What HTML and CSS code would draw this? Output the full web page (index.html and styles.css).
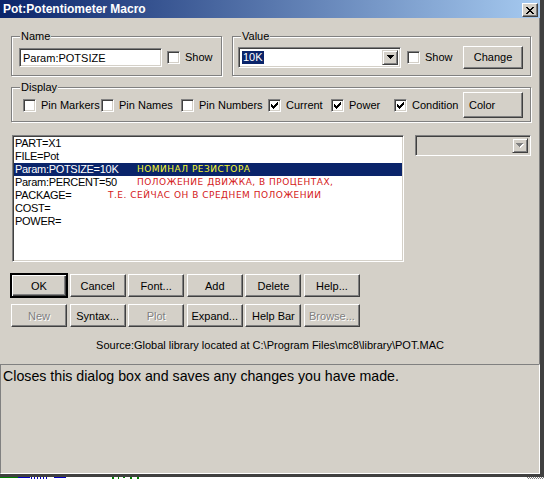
FILE: index.html
```html
<!DOCTYPE html>
<html>
<head>
<meta charset="utf-8">
<link rel="stylesheet" href="styles.css">
</head>
<body>
<div class="screen">
  <div class="window">
    <div class="titlebar">
      <span class="title">Pot:Potentiometer Macro</span>
      <span class="close"><svg width="8" height="7" viewBox="0 0 8 7" shape-rendering="crispEdges"><path d="M0 0h2v1h-2zM6 0h2v1h-2zM1 1h2v1h-2zM5 1h2v1h-2zM2 2h4v1h-4zM3 3h2v1h-2zM2 4h4v1h-4zM1 5h2v1h-2zM5 5h2v1h-2zM0 6h2v1h-2zM6 6h2v1h-2z" fill="#000"/></svg></span>
    </div>
    <div class="client">
      <div class="row-top">
        <div class="group g-name">
          <span class="legend">Name</span>
          <div class="grow">
            <div class="edit e-name">Param:POTSIZE</div>
            <span class="check"><span class="box"></span><span>Show</span></span>
          </div>
        </div>
        <div class="group g-value">
          <span class="legend">Value</span>
          <div class="grow">
            <div class="combo c-value">
              <span class="combo-text"><span class="sel">10K</span></span>
              <span class="dd"><svg width="7" height="4" viewBox="0 0 7 4" shape-rendering="crispEdges"><path d="M0 0h7v1h-7zM1 1h5v1h-5zM2 2h3v1h-3zM3 3h1v1h-1z" fill="#000"/></svg></span>
            </div>
            <span class="check c-show2"><span class="box"></span><span>Show</span></span>
            <span class="btn b-change">Change</span>
          </div>
        </div>
      </div>

      <div class="group g-display">
        <span class="legend">Display</span>
        <div class="drow">
          <span class="check"><span class="box"></span><span>Pin Markers</span></span>
          <span class="check"><span class="box"></span><span>Pin Names</span></span>
          <span class="check"><span class="box"></span><span>Pin Numbers</span></span>
          <span class="check"><span class="box on"><svg width="7" height="7" viewBox="0 0 7 7" shape-rendering="crispEdges"><path d="M6 0h1v1h-1zM5 1h2v1h-2zM0 2h1v1h-1zM4 2h3v1h-3zM0 3h2v1h-2zM3 3h3v1h-3zM0 4h5v1h-5zM1 5h3v1h-3zM2 6h1v1h-1z" fill="#000"/></svg></span><span>Current</span></span>
          <span class="check"><span class="box on"><svg width="7" height="7" viewBox="0 0 7 7" shape-rendering="crispEdges"><path d="M6 0h1v1h-1zM5 1h2v1h-2zM0 2h1v1h-1zM4 2h3v1h-3zM0 3h2v1h-2zM3 3h3v1h-3zM0 4h5v1h-5zM1 5h3v1h-3zM2 6h1v1h-1z" fill="#000"/></svg></span><span>Power</span></span>
          <span class="check"><span class="box on"><svg width="7" height="7" viewBox="0 0 7 7" shape-rendering="crispEdges"><path d="M6 0h1v1h-1zM5 1h2v1h-2zM0 2h1v1h-1zM4 2h3v1h-3zM0 3h2v1h-2zM3 3h3v1h-3zM0 4h5v1h-5zM1 5h3v1h-3zM2 6h1v1h-1z" fill="#000"/></svg></span><span>Condition</span></span>
          <span class="btn b-color">Color</span>
        </div>
      </div>

      <div class="mid">
        <div class="listbox">
          <div class="li">PART=X1</div>
          <div class="li">FILE=Pot</div>
          <div class="li selected">Param:POTSIZE=10K<span class="note yellow n1">НОМИНАЛ РЕЗИСТОРА</span></div>
          <div class="li">Param:PERCENT=50<span class="note red n1">ПОЛОЖЕНИЕ ДВИЖКА, В ПРОЦЕНТАХ,</span></div>
          <div class="li">PACKAGE=<span class="note red n2">Т.Е. СЕЙЧАС ОН В СРЕДНЕМ ПОЛОЖЕНИИ</span></div>
          <div class="li">COST=</div>
          <div class="li">POWER=</div>
        </div>
        <div class="combo c-side disabled">
          <span class="combo-text"></span>
          <span class="dd"><svg width="8" height="5" viewBox="0 0 8 5" shape-rendering="crispEdges"><path d="M1 1h7v1h-7zM2 2h5v1h-5zM3 3h3v1h-3zM4 4h1v1h-1z" fill="#fff"/><path d="M0 0h7v1h-7zM1 1h5v1h-5zM2 2h3v1h-3zM3 3h1v1h-1z" fill="#808080"/></svg></span>
        </div>
      </div>

      <div class="buttons">
        <span class="btn default">OK</span>
        <span class="btn">Cancel</span>
        <span class="btn">Font...</span>
        <span class="btn">Add</span>
        <span class="btn">Delete</span>
        <span class="btn">Help...</span>
        <span class="btn off">New</span>
        <span class="btn">Syntax...</span>
        <span class="btn off">Plot</span>
        <span class="btn">Expand...</span>
        <span class="btn">Help Bar</span>
        <span class="btn off">Browse...</span>
      </div>

      <div class="source">Source:Global library located at C:\Program Files\mc8\library\POT.MAC</div>

      <div class="help">Closes this dialog box and saves any changes you have made.</div>
    </div>
  </div>
  <div class="underlay">
    <svg width="544" height="2" viewBox="0 0 544 2" shape-rendering="crispEdges">
      <rect x="0" y="0" width="544" height="2" fill="#ffffff"/>
      <rect x="0" y="0" width="18" height="1" fill="#008000"/>
      <rect x="18" y="0" width="12" height="1" fill="#0000c0"/>
      <path d="M31 0h1v2h-1zM34 0h1v2h-1zM37 0h1v2h-1zM40 0h1v2h-1zM43 0h1v2h-1zM46 0h1v2h-1zM54 0h12v1h-12z" fill="#0000c0"/>
      <path d="M112 0h2v2h-2zM118 0h1v2h-1zM123 0h2v1h-2zM130 0h2v2h-2zM137 0h2v2h-2z" fill="#008000"/>
      <path d="M527 0h1v1h-1zM529 0h1v1h-1zM531 0h1v1h-1zM533 0h1v1h-1zM535 0h1v1h-1zM537 0h1v1h-1zM539 0h1v1h-1zM541 0h1v1h-1zM543 0h1v1h-1zM528 1h1v1h-1zM530 1h1v1h-1zM532 1h1v1h-1zM534 1h1v1h-1zM536 1h1v1h-1zM538 1h1v1h-1zM540 1h1v1h-1zM542 1h1v1h-1z" fill="#808080"/>
    </svg>
  </div>
</div>
</body>
</html>
```
FILE: styles.css
```css
* { box-sizing: border-box; }

body {
  margin: 0;
  background: #ffffff;
  font-family: "Liberation Sans", Arial, sans-serif;
  font-size: 11px;
  color: #000;
}

.screen {
  width: 544px;
  height: 479px;
  overflow: hidden;
  display: flex;
  flex-direction: column;
}

.window {
  width: 544px;
  height: 477px;
  flex: none;
  display: flex;
  flex-direction: column;
  background: #d4d0c8;
  border-right: 4px solid #404040;
  border-bottom: 3px solid #404040;
  box-shadow: inset -1px -1px 0 #808080;
}

.titlebar {
  height: 18px;
  flex: none;
  width: 540px;
  display: flex;
  align-items: center;
  justify-content: space-between;
  background: linear-gradient(to right, #0a246a, #a6caf0);
  padding-left: 3px;
  padding-right: 2px;
}

.title {
  color: #fff;
  font-weight: bold;
  font-size: 12px;
  line-height: 18px;
  white-space: nowrap;
}

.close {
  width: 16px;
  height: 14px;
  display: flex;
  align-items: center;
  justify-content: center;
  background: #d4d0c8;
  border: 1px solid;
  border-color: #fff #404040 #404040 #fff;
  box-shadow: inset -1px -1px 0 #808080;
  margin-top: 2px;
}

.client {
  flex: 1;
  width: 540px;
  display: flex;
  flex-direction: column;
  min-height: 0;
}

/* group boxes */
.group {
  border: 1px solid #808080;
  box-shadow: 1px 1px 0 #fff, inset 1px 1px 0 #fff;
}

.legend {
  display: block;
  width: max-content;
  margin: -7px 0 0 8px;
  padding: 0 1px;
  line-height: 13px;
  background: #d4d0c8;
}

.row-top {
  display: flex;
  gap: 10px;
  margin: 18px 0 0 11px;
}

.g-name { width: 211px; height: 40px; }
.g-value { width: 299px; height: 40px; }

.grow {
  display: flex;
  align-items: center;
  height: 24px;
  margin-top: 2px;
}

.g-name .grow { padding-left: 7px; }
.g-value .grow { padding-left: 5px; padding-right: 7px; }

.edit {
  background: #fff;
  border: 1px solid;
  border-color: #808080 #fff #fff #808080;
  box-shadow: inset 1px 1px 0 #404040, inset -1px -1px 0 #d4d0c8;
  height: 19px;
  line-height: 15px;
  padding: 2px 3px;
  white-space: nowrap;
}

.e-name { width: 143px; margin-right: 5px; }

.check {
  display: flex;
  align-items: center;
  gap: 5px;
  white-space: nowrap;
  line-height: 13px;
}

.box {
  width: 13px;
  height: 13px;
  flex: none;
  background: #fff;
  border: 1px solid;
  border-color: #808080 #fff #fff #808080;
  box-shadow: inset 1px 1px 0 #404040, inset -1px -1px 0 #d4d0c8;
  display: flex;
  align-items: center;
  justify-content: center;
}

.box svg { display: block; }

.combo {
  display: flex;
  align-items: stretch;
  height: 21px;
  background: #fff;
  border: 1px solid;
  border-color: #808080 #fff #fff #808080;
  box-shadow: inset 1px 1px 0 #404040, inset -1px -1px 0 #d4d0c8;
  padding: 2px;
}

.c-value { width: 163px; margin-right: 6px; }

.combo-text {
  flex: 1;
  display: flex;
  align-items: center;
  padding-left: 1px;
}

.sel {
  background: #0a246a;
  color: #fff;
  line-height: 13px;
  padding: 0 1px;
}

.dd {
  width: 16px;
  flex: none;
  display: flex;
  align-items: center;
  justify-content: center;
  background: #d4d0c8;
  border: 1px solid;
  border-color: #d4d0c8 #404040 #404040 #d4d0c8;
  box-shadow: inset 1px 1px 0 #fff, inset -1px -1px 0 #808080;
}

.disabled { background: #d4d0c8; }

.btn {
  display: flex;
  align-items: center;
  justify-content: center;
  background: #d4d0c8;
  border: 1px solid;
  border-color: #fff #404040 #404040 #fff;
  box-shadow: inset -1px -1px 0 #808080;
  white-space: nowrap;
}

.b-change { width: 60px; height: 23px; margin-left: auto; }

.g-display {
  width: 520px;
  height: 35px;
  margin: 11px 0 0 11px;
}

.drow {
  display: grid;
  grid-template-columns: 78px 80px 87px 63px 63px 69px 60px;
  align-items: center;
  height: 26px;
  margin-top: -2px;
  padding-left: 11px;
}

.b-color {
  height: 26px;
  justify-content: flex-start;
  padding-left: 5px;
}

.mid {
  display: flex;
  align-items: flex-start;
  margin: 13px 0 0 12px;
}

.listbox {
  width: 392px;
  height: 127px;
  background: #fff;
  border: 1px solid;
  border-color: #808080 #fff #fff #808080;
  box-shadow: inset 1px 1px 0 #404040, inset -1px -1px 0 #d4d0c8;
  padding: 1px;
}

.li {
  position: relative;
  height: 13px;
  line-height: 13px;
  padding-left: 1px;
  letter-spacing: -0.3px;
  white-space: nowrap;
}

.li.selected { background: #0a246a; color: #fff; }

.note {
  position: absolute;
  top: 0;
  font-family: "DejaVu Sans", sans-serif;
  font-size: 9px;
  letter-spacing: 0.5px;
  line-height: 13px;
}

.n1 { left: 123px; }
.n2 { left: 94px; }

.yellow { color: #f8f830; }
.red { color: #d42020; }

.c-side { width: 116px; margin-left: 11px; }

.buttons {
  display: grid;
  grid-template-columns: repeat(6, 56px);
  grid-auto-rows: 23px;
  column-gap: 2.6px;
  row-gap: 7px;
  margin: 12px 0 0 11px;
}

.btn.default {
  border-color: #000;
  box-shadow: inset 1px 1px 0 #fff, inset -1px -1px 0 #404040, inset -2px -2px 0 #808080;
  outline: 1px solid #000;
}

.btn.off {
  color: #808080;
  text-shadow: 1px 1px 0 #fff;
}

.source {
  margin-top: 11px;
  line-height: 14px;
  text-align: center;
  white-space: nowrap;
}

.help {
  flex: 1;
  margin-top: 12px;
  border: 1px solid;
  border-color: #808080 #fff #fff #808080;
  font-size: 14.2px;
  line-height: 17px;
  padding: 3px 2px;
  white-space: nowrap;
}

.underlay {
  height: 2px;
  flex: none;
  display: flex;
}

.underlay svg { display: block; }
```
